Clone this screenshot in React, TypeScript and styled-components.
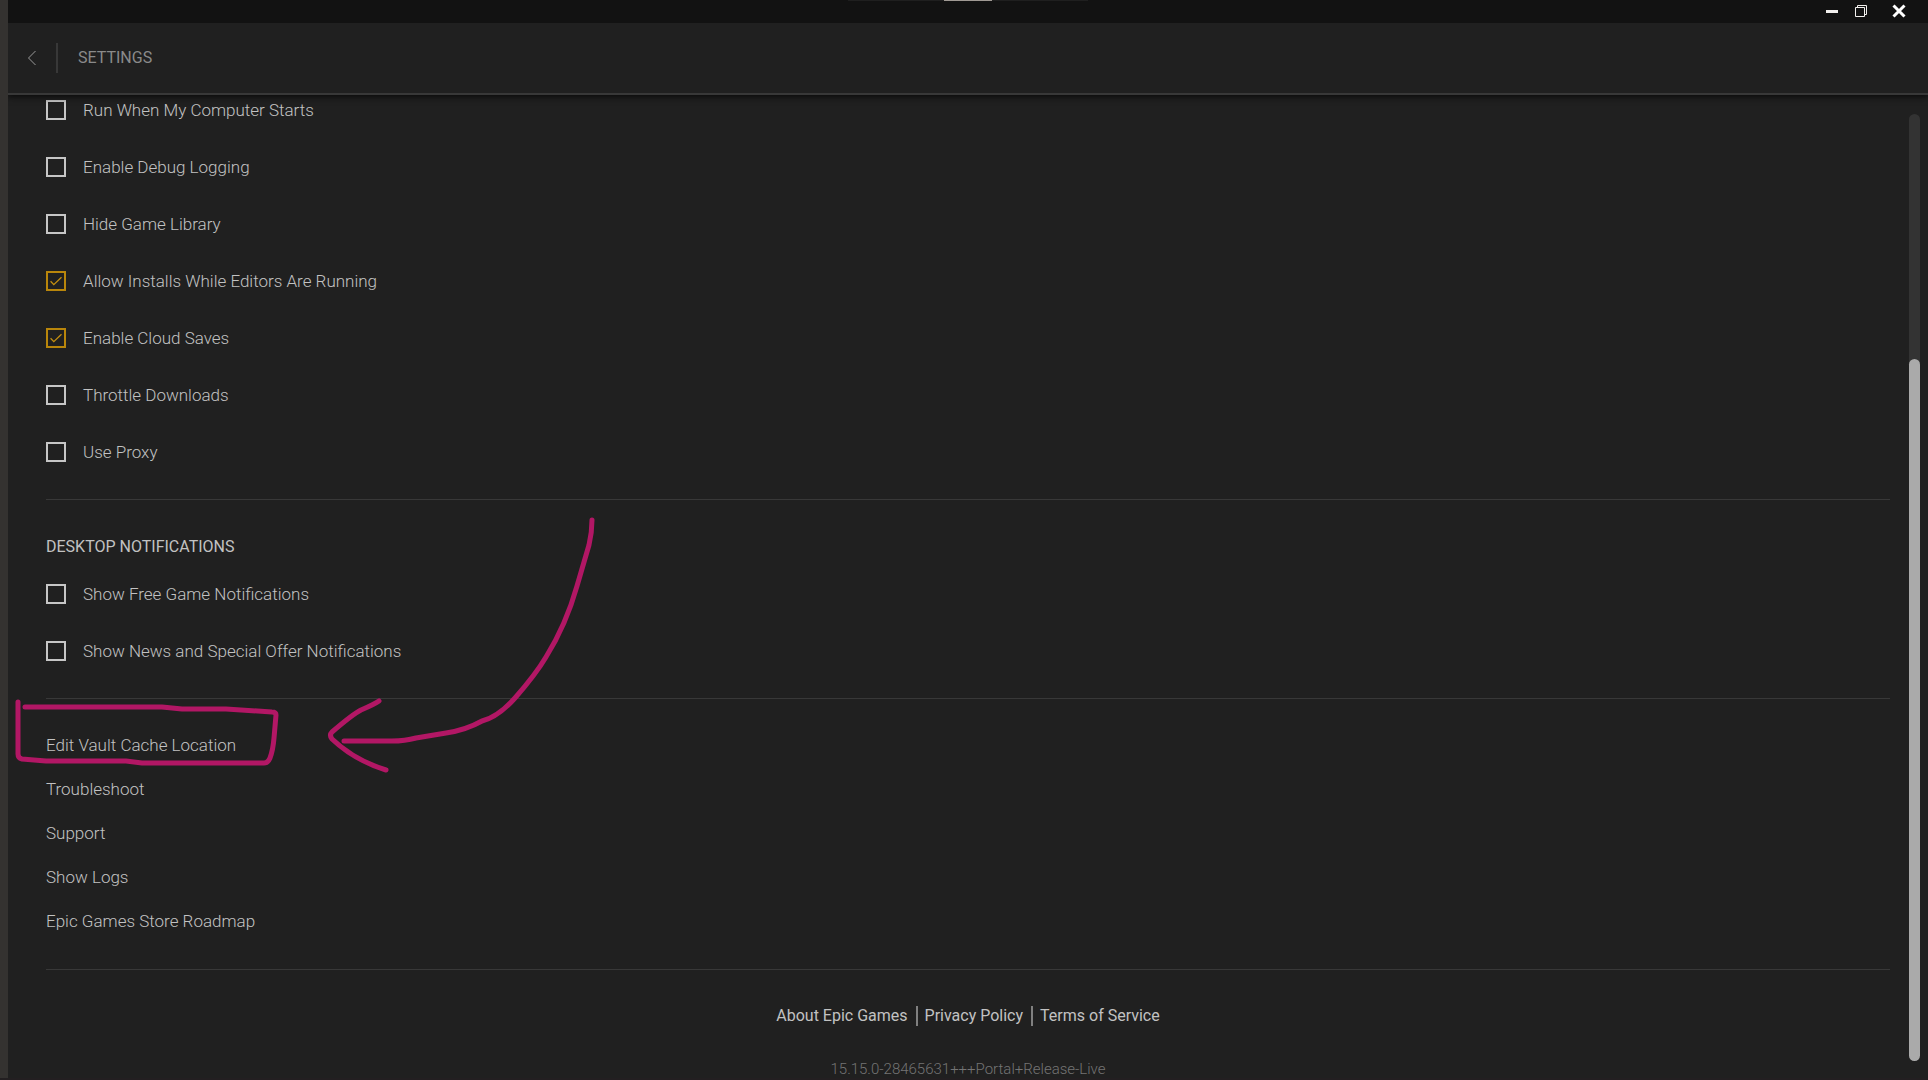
import { useState } from "react";
import styled, { createGlobalStyle } from "styled-components";

const GlobalStyle = createGlobalStyle`
  * { box-sizing: border-box; }
  body {
    margin: 0;
    background: #202020;
    color: #c2c2c2;
    font-family: Roboto, "Liberation Sans", sans-serif;
    font-size: 17px;
    font-weight: 300;
    line-height: 20px;
  }
`;

const Shell = styled.div`
  display: flex;
  height: 100vh;
  overflow: hidden;
  border-bottom: 2px solid #231f21;
`;

const DesktopEdge = styled.div`
  flex: none;
  width: 8px;
  background: #343230;
`;

const Window = styled.div`
  position: relative;
  display: flex;
  flex: 1;
  flex-direction: column;
  min-width: 0;
  overflow: hidden;
`;

const TitleBar = styled.div`
  position: relative;
  z-index: 2;
  display: flex;
  flex: none;
  align-items: flex-start;
  justify-content: flex-end;
  height: 23px;
  padding-right: 15px;
  background: #121212;
`;

const DragHandle = styled.div`
  position: absolute;
  top: 0;
  left: 50%;
  display: flex;
  justify-content: center;
  width: 240px;
  height: 1px;
  background: #1f1f1f;
  transform: translateX(-50%);

  &::before {
    content: "";
    width: 48px;
    background: #a09a94;
  }
`;

const WindowButton = styled.button<{ $gap?: number }>`
  display: flex;
  align-items: center;
  justify-content: center;
  width: 28px;
  height: 22px;
  margin-left: ${(p) => p.$gap ?? 0}px;
  padding: 0;
  border: 0;
  background: none;
  color: #f2f0ee;
`;

const Header = styled.header`
  position: relative;
  z-index: 1;
  display: flex;
  flex: none;
  align-items: center;
  height: 72px;
  padding-left: 14px;
  border-bottom: 2px solid #383838;
  box-shadow: 0 2px 6px #0a0a0a;
`;

const BackButton = styled.button`
  display: flex;
  align-items: center;
  justify-content: center;
  width: 20px;
  height: 30px;
  padding: 0;
  border: 0;
  background: none;
  color: #9a9a9a;
`;

const HeaderDivider = styled.span`
  width: 2px;
  height: 30px;
  margin: 0 20px 0 14px;
  background: #383838;
`;

const Title = styled.h1`
  margin: 0;
  color: #8a8a8a;
  font-size: 16px;
  font-weight: 400;
`;

const Body = styled.div`
  display: flex;
  flex: 1;
  min-height: 0;
`;

const Content = styled.main`
  flex: 1;
  min-width: 0;
  padding: 5px 19px 0 38px;
  overflow: hidden;
`;

const Section = styled.section`
  padding-bottom: 37px;
  border-bottom: 1px solid #383838;
`;

const SectionTitle = styled.h2`
  margin: 0;
  padding: 37px 0 27px;
  font-size: 16px;
  font-weight: 400;
`;

const OptionList = styled.div`
  display: flex;
  flex-direction: column;
  align-items: flex-start;
  gap: 37px;
`;

const Option = styled.label`
  display: flex;
  align-items: center;
  gap: 17px;
`;

const CheckFrame = styled.span`
  display: grid;
  place-items: center;
  width: 20px;
  height: 20px;

  > * {
    grid-area: 1 / 1;
  }
`;

const CheckInput = styled.input`
  width: 20px;
  height: 20px;
  margin: 0;
  border: 2px solid #c6c6c6;
  background: none;
  appearance: none;

  &:checked {
    border-color: #b9860b;
  }

  & + svg {
    visibility: hidden;
    pointer-events: none;
  }

  &:checked + svg {
    visibility: visible;
  }
`;

const LinkList = styled.nav`
  display: flex;
  flex-direction: column;
  align-items: flex-start;
  gap: 24px;
  padding: 36px 0 38px;
  border-bottom: 1px solid #383838;
`;

const TextLink = styled.a`
  color: inherit;
  text-decoration: none;
`;

const Footer = styled.footer`
  display: flex;
  flex-direction: column;
  align-items: center;
  padding-top: 36px;
`;

const FooterLinks = styled.nav`
  display: flex;
  align-items: center;
  font-size: 16px;
  font-weight: 400;
`;

const FooterLink = styled(TextLink)`
  & + & {
    margin-left: 8px;
    padding-left: 7px;
    border-left: 2px solid #808080;
  }
`;

const Version = styled.p`
  margin: 33px 0 0;
  color: #747474;
  font-size: 15px;
`;

const ScrollTrack = styled.div`
  display: grid;
  flex: none;
  grid-template-rows: 245fr 702fr;
  width: 11px;
  margin: 19px 8px 17px 0;
  border-radius: 6px;
  background: #333333;
`;

const ScrollThumb = styled.div`
  grid-row: 2;
  border-radius: 6px;
  background: #aaaaaa;
`;

const Ink = styled.svg`
  position: absolute;
  top: 0;
  left: 0;
  z-index: 2;
  width: 620px;
  height: 800px;
  fill: none;
  stroke: #b21765;
  stroke-width: 5;
  stroke-linecap: round;
  stroke-linejoin: round;
  pointer-events: none;
`;

type Setting = { label: string; on?: boolean };

const generalSettings: Setting[] = [
  { label: "Run When My Computer Starts" },
  { label: "Enable Debug Logging" },
  { label: "Hide Game Library" },
  { label: "Allow Installs While Editors Are Running", on: true },
  { label: "Enable Cloud Saves", on: true },
  { label: "Throttle Downloads" },
  { label: "Use Proxy" },
];

const notificationSettings: Setting[] = [
  { label: "Show Free Game Notifications" },
  { label: "Show News and Special Offer Notifications" },
];

const links = [
  "Edit Vault Cache Location",
  "Troubleshoot",
  "Support",
  "Show Logs",
  "Epic Games Store Roadmap",
];

const legalLinks = ["About Epic Games", "Privacy Policy", "Terms of Service"];

function SettingOption({ label, on = false }: Setting) {
  const [checked, setChecked] = useState(on);
  return (
    <Option>
      <CheckFrame>
        <CheckInput
          type="checkbox"
          checked={checked}
          onChange={(e) => setChecked(e.target.checked)}
        />
        <svg width="12" height="10" viewBox="0 0 12 10" fill="none" stroke="#c48f10" strokeWidth="1.3">
          <path d="M.6 5.2 3.8 8.6 11.5 1.2" />
        </svg>
      </CheckFrame>
      {label}
    </Option>
  );
}

export default function App() {
  return (
    <>
      <GlobalStyle />
      <Shell>
        <DesktopEdge />
        <Window>
          <TitleBar>
            <DragHandle />
            <WindowButton aria-label="Minimize">
              <svg width="12" height="12">
                <rect y="5" width="12" height="3" fill="currentColor" />
              </svg>
            </WindowButton>
            <WindowButton aria-label="Restore" $gap={1}>
              <svg width="12" height="12" fill="none" stroke="currentColor">
                <path d="M.5 2.5h9v9h-9zM2.5 2.5v-2h9v9h-2" />
              </svg>
            </WindowButton>
            <WindowButton aria-label="Close" $gap={10}>
              <svg width="14" height="14" stroke="#ffffff" strokeWidth="3">
                <path d="M1.5 1.5l11 11M12.5 1.5l-11 11" />
              </svg>
            </WindowButton>
          </TitleBar>
          <Header>
            <BackButton aria-label="Back">
              <svg width="10" height="16" fill="none" stroke="currentColor">
                <path d="M8.5 1 1.5 8l7 7" />
              </svg>
            </BackButton>
            <HeaderDivider />
            <Title>SETTINGS</Title>
          </Header>
          <Body>
            <Content>
              <Section>
                <OptionList>
                  {generalSettings.map((s) => (
                    <SettingOption key={s.label} {...s} />
                  ))}
                </OptionList>
              </Section>
              <Section>
                <SectionTitle>DESKTOP NOTIFICATIONS</SectionTitle>
                <OptionList>
                  {notificationSettings.map((s) => (
                    <SettingOption key={s.label} {...s} />
                  ))}
                </OptionList>
              </Section>
              <LinkList>
                {links.map((label) => (
                  <TextLink key={label} href="#">
                    {label}
                  </TextLink>
                ))}
              </LinkList>
              <Footer>
                <FooterLinks>
                  {legalLinks.map((label) => (
                    <FooterLink key={label} href="#">
                      {label}
                    </FooterLink>
                  ))}
                </FooterLinks>
                <Version>15.15.0-28465631+++Portal+Release-Live</Version>
              </Footer>
            </Content>
            <ScrollTrack>
              <ScrollThumb />
            </ScrollTrack>
          </Body>
          <Ink viewBox="8 0 620 800" aria-hidden="true">
            <path d="M18 702v52q0 4 4 5l24 2h80l16 2h122q4 0 6-5 3-8 4-20l2-23q0-3-4-3l-46-3h-44l-20-2H25" />
            <path d="M592 520Q592 532 589 545L577 586Q566 625 546 657Q536 674 515 698Q498 717 482 721Q466 730 446 733L416 738Q405 741 392 741H344" />
            <path d="M379 701q-4 3-18 9-8 4-29 22-3 3 0 7 22 21 54 31" />
          </Ink>
        </Window>
      </Shell>
    </>
  );
}
